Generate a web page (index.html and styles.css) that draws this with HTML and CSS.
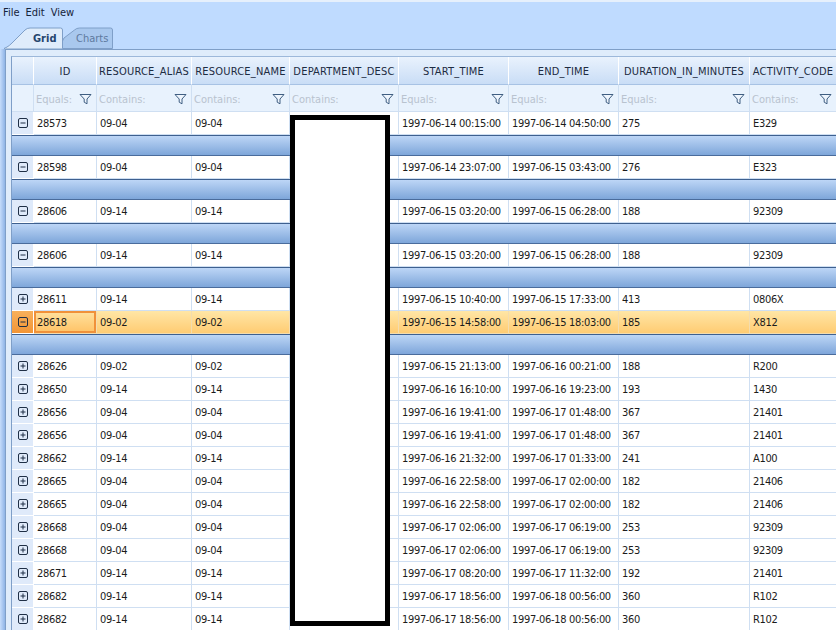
FILE: index.html
```html
<!DOCTYPE html>
<html lang="en">
<head>
<meta charset="utf-8">
<title>Grid</title>
<link rel="stylesheet" href="styles.css">
</head>
<body>
<svg class="defs" width="0" height="0" aria-hidden="true">
  <symbol id="funnel" viewBox="0 0 13 12"><path d="M1 1.500h11L8 6v4.800L5.200 9.200V6z" fill="#eef5fd" stroke="#3f5e82" stroke-width="1"/></symbol>
  <symbol id="minus" viewBox="0 0 10 10"><rect x=".5" y=".5" width="9" height="9" rx="1.500" fill="none" stroke="#1f2f46"/><path d="M2.500 5h5" stroke="#1f2f46"/></symbol>
  <symbol id="plus" viewBox="0 0 10 10"><rect x=".5" y=".5" width="9" height="9" rx="1.500" fill="none" stroke="#1f2f46"/><path d="M2.500 5h5M5 2.500v5" stroke="#1f2f46"/></symbol>
</svg>
<div class="window">
  <nav class="menu"><span>File</span><span>Edit</span><span>View</span></nav>
  <div class="tabs">
    <svg class="tabshape" width="116" height="24" viewBox="0 0 116 24" aria-hidden="true">
      <path d="M64 13L74.500 5q2-2 5-2h31q2 0 2 2v18.500H62.500V16z" fill="#a9c8ee" stroke="#7f9fc8"/>
      <path d="M62.500 23.500V5q0-2-2-2H30q-3 0-5 2L12 18q-3 3-5 4l-3 1.500z" fill="#dfecfb" stroke="#7f9fc8"/>
      <path d="M5 24h57" stroke="#dfecfb"/>
    </svg>
    <span class="tab tab-active">Grid</span>
    <span class="tab">Charts</span>
  </div>
  <div class="panel">
    <div class="gridwrap">
      <table class="grid">
        <colgroup><col class="c0"><col class="c1"><col class="c2"><col class="c3"><col class="c4"><col class="c5"><col class="c6"><col class="c7"><col class="c8"></colgroup>
        <thead>
          <tr class="head"><th></th><th>ID</th><th>RESOURCE_ALIAS</th><th>RESOURCE_NAME</th><th>DEPARTMENT_DESC</th><th>START_TIME</th><th>END_TIME</th><th>DURATION_IN_MINUTES</th><th>ACTIVITY_CODE</th></tr>
          <tr class="filter"><td></td>
            <td><div class="fc">Equals:<svg class="fn"><use href="#funnel"/></svg></div></td>
            <td><div class="fc">Contains:<svg class="fn"><use href="#funnel"/></svg></div></td>
            <td><div class="fc">Contains:<svg class="fn"><use href="#funnel"/></svg></div></td>
            <td><div class="fc">Contains:<svg class="fn"><use href="#funnel"/></svg></div></td>
            <td><div class="fc">Equals:<svg class="fn"><use href="#funnel"/></svg></div></td>
            <td><div class="fc">Equals:<svg class="fn"><use href="#funnel"/></svg></div></td>
            <td><div class="fc">Equals:<svg class="fn"><use href="#funnel"/></svg></div></td>
            <td><div class="fc">Contains:<svg class="fn"><use href="#funnel"/></svg></div></td>
          </tr>
        </thead>
        <tbody id="body"></tbody>
      </table>
      <div class="redact"></div>
    </div>
  </div>
</div>
<script src="app.js"></script>
</body>
</html>
```
FILE: app.js
```js
const rows = [
 [1,"28573","09-04","1997-06-14 00:15:00","1997-06-14 04:50:00","275","E329"],
 [1,"28598","09-04","1997-06-14 23:07:00","1997-06-15 03:43:00","276","E323"],
 [1,"28606","09-14","1997-06-15 03:20:00","1997-06-15 06:28:00","188","92309"],
 [1,"28606","09-14","1997-06-15 03:20:00","1997-06-15 06:28:00","188","92309"],
 [0,"28611","09-14","1997-06-15 10:40:00","1997-06-15 17:33:00","413","0806X"],
 [2,"28618","09-02","1997-06-15 14:58:00","1997-06-15 18:03:00","185","X812"],
 [0,"28626","09-02","1997-06-15 21:13:00","1997-06-16 00:21:00","188","R200"],
 [0,"28650","09-14","1997-06-16 16:10:00","1997-06-16 19:23:00","193","1430"],
 [0,"28656","09-04","1997-06-16 19:41:00","1997-06-17 01:48:00","367","21401"],
 [0,"28656","09-04","1997-06-16 19:41:00","1997-06-17 01:48:00","367","21401"],
 [0,"28662","09-14","1997-06-16 21:32:00","1997-06-17 01:33:00","241","A100"],
 [0,"28665","09-04","1997-06-16 22:58:00","1997-06-17 02:00:00","182","21406"],
 [0,"28665","09-04","1997-06-16 22:58:00","1997-06-17 02:00:00","182","21406"],
 [0,"28668","09-04","1997-06-17 02:06:00","1997-06-17 06:19:00","253","92309"],
 [0,"28668","09-04","1997-06-17 02:06:00","1997-06-17 06:19:00","253","92309"],
 [0,"28671","09-14","1997-06-17 08:20:00","1997-06-17 11:32:00","192","21401"],
 [0,"28682","09-14","1997-06-17 18:56:00","1997-06-18 00:56:00","360","R102"],
 [0,"28682","09-14","1997-06-17 18:56:00","1997-06-18 00:56:00","360","R102"]
];
let html = "";
for (const [state, id, res, start, end, dur, code] of rows) {
  const icon = state ? "minus" : "plus";
  html += `<tr class="row${state === 2 ? " selected" : ""}">` +
    `<td class="ind"><svg class="tog"><use href="#${icon}"/></svg></td>` +
    `<td${state === 2 ? ' class="active"' : ""}>${id}</td><td>${res}</td><td>${res}</td><td></td>` +
    `<td>${start}</td><td>${end}</td><td>${dur}</td><td>${code}</td></tr>`;
  if (state) html += `<tr class="detail"><td colspan="9"></td></tr>`;
}
document.getElementById("body").innerHTML = html;
```
FILE: styles.css
```css
html, body { margin: 0; padding: 0; height: 100%; overflow: hidden; }
body { font: 11px/13px "DejaVu Sans Condensed", "DejaVu Sans", sans-serif; color: #1b1b1b; background: linear-gradient(90deg, #c5dcfb, #8fb4e6 5px, #bfdbff 5px); }
.defs { position: absolute; }
.window { height: 630px; border-top: 2px solid #e6f0fc; box-sizing: border-box; overflow: hidden; display: flex; flex-direction: column; background: linear-gradient(#bfdbff, #bfdbff) top / 100% 47px no-repeat; }
.menu { display: flex; gap: 6px; padding: 4px 0 0 3px; height: 22px; box-sizing: border-box; color: #15233a; }
.tabs { position: relative; display: flex; height: 25px; padding-left: 5px; flex: none; }
.tabshape { position: absolute; left: 0; top: 1px; }
.tab { position: relative; margin-top: 8px; color: #5f7a9e; }
.tab-active { margin-left: 28px; width: 43px; color: #25456e; font-weight: bold; }
.panel { flex: 1; margin-left: 5px; border-top: 1px solid #7f9fc8; border-left: 1px solid #7f9fc8; background: #dfecfb; padding: 6px 0 0 5px; min-height: 0; }
.gridwrap { position: relative; width: 825px; overflow: hidden; height: 600px; }
.grid { table-layout: fixed; border-collapse: separate; border-spacing: 0; width: 826px; background: #fff; border-left: 1px solid #7f9fc8; border-top: 1px solid #9db8da; }
.c0 { width: 22px; } .c1 { width: 63px; } .c2 { width: 95px; } .c3 { width: 98px; } .c4 { width: 109px; }
.c5 { width: 110px; } .c6 { width: 110px; } .c7 { width: 131px; } .c8 { width: 87px; }
th, td { padding: 0; overflow: hidden; white-space: nowrap; }
.head th { height: 26px; padding-top: 1px; font-weight: normal; text-align: center; letter-spacing: .2px; color: #1d2c42; background: linear-gradient(#e9f2fd, #c9ddf6); border-right: 1px solid #fff; border-bottom: 1px solid #a7c2e4; }
.filter td { height: 24px; padding-top: 2px; background: #e8f2fd; color: #b9c3cf; border-right: 1px solid #cfdff2; border-bottom: 1px solid #cfdff2; }
.fc { display: flex; justify-content: space-between; align-items: center; padding: 0 4px 0 2px; }
.fn { width: 13px; height: 12px; }
.row td { height: 22px; padding-left: 3px; letter-spacing: -.33px; border-right: 1px solid #cfdff2; border-bottom: 1px solid #cfdff2; }
.row .ind { padding: 0; text-align: center; background: #dfeafa; border-right: 1px solid #fff; border-bottom: 1px solid #fff; }
.tog { width: 10px; height: 10px; display: block; margin: 0 auto 1px; }
.selected td { background: linear-gradient(#ffe6a6, #ffcc73); border-right-color: #f3dcae; border-bottom-color: #f3dcae; }
.row.selected .ind { background: linear-gradient(#f8b05a, #f29536); border-right-color: #fff; border-bottom-color: #fff; }
.selected .active { box-shadow: inset 0 0 0 2px #f0913a; background: linear-gradient(#ffe2a0, #ffc265); }
.detail td { height: 19px; background: linear-gradient(#bdd6f6, #7ea6da); border-top: 1px solid #3e608f; border-bottom: 1px solid #4a6c9c; }
.redact { position: absolute; left: 279px; top: 59px; width: 90px; height: 501px; background: #fff; border: 5px solid #000; }
```
